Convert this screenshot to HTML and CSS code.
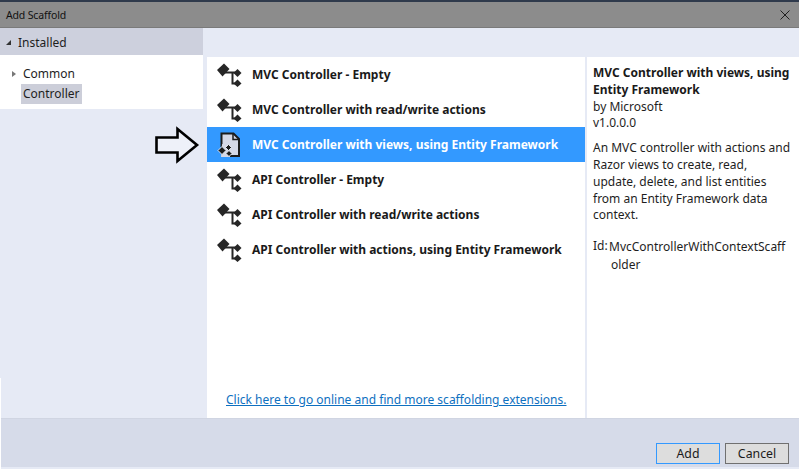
FILE: index.html
```html
<!DOCTYPE html>
<html lang="en">
<head>
<meta charset="utf-8">
<title>Add Scaffold</title>
<link rel="stylesheet" href="styles.css">
</head>
<body>
<div class="dialog">
  <header class="titlebar">
    <span class="title">Add Scaffold</span>
    <svg class="close" width="10" height="10" viewBox="0 0 10 10"><path d="M.5.5l9 9M9.5.5l-9 9" stroke="#1e1e1e" stroke-width="1" fill="none"/></svg>
  </header>
  <div class="body">
    <aside class="side">
      <div class="installed"><span class="tri-open"></span>Installed</div>
      <div class="tree">
        <div class="node"><span class="tri-closed"></span><span class="label">Common</span></div>
        <div class="node"><span class="label selected">Controller</span></div>
      </div>
    </aside>
    <main class="center">
      <div class="list">
        <div class="item"><svg class="ico" width="26" height="25" viewBox="0 0 26 25"><use href="#ctrl"/></svg><span>MVC Controller - Empty</span></div>
        <div class="item"><svg class="ico" width="26" height="25" viewBox="0 0 26 25"><use href="#ctrl"/></svg><span>MVC Controller with read/write actions</span></div>
        <div class="item active">
          <svg class="ico" width="26" height="25" viewBox="0 0 26 25">
            <path d="M4.500 15V1.500h12l5.500 5.500v17H10" fill="#d5d8e6" stroke="#1c1c1c" stroke-width="2"/>
            <path d="M16 2v5.500h5.500" fill="none" stroke="#1c1c1c" stroke-width="1.500"/>
            <path d="M5 12l8 2v11H4z" fill="#d5d8e6"/>
            <path d="M1 18.500l4-4 4 4-4 4zM9 21.500l3-3 3 3-3 3zM8.500 15.500l3-3 3 3-3 3z" fill="#1c1c1c" stroke="#eef0f8" stroke-width=".9"/>
          </svg>
          <span>MVC Controller with views, using Entity Framework</span>
        </div>
        <div class="item"><svg class="ico" width="26" height="25" viewBox="0 0 26 25"><use href="#ctrl"/></svg><span>API Controller - Empty</span></div>
        <div class="item"><svg class="ico" width="26" height="25" viewBox="0 0 26 25"><use href="#ctrl"/></svg><span>API Controller with read/write actions</span></div>
        <div class="item"><svg class="ico" width="26" height="25" viewBox="0 0 26 25"><use href="#ctrl"/></svg><span>API Controller with actions, using Entity Framework</span></div>
      </div>
      <a class="online" href="#">Click here to go online and find more scaffolding extensions.</a>
    </main>
    <section class="details">
      <h2 class="d-title">MVC Controller with views, using Entity Framework</h2>
      <div class="d-meta">by Microsoft</div>
      <div class="d-meta">v1.0.0.0</div>
      <p class="d-desc">An MVC controller with actions and Razor views to create, read, update, delete, and list entities from an Entity Framework data context.</p>
      <div class="d-id"><span class="d-id-key">Id:</span><span class="d-id-val">MvcControllerWithContextScaff<br>older</span></div>
    </section>
  </div>
  <footer class="footer">
    <button class="btn primary">Add</button>
    <button class="btn">Cancel</button>
  </footer>
</div>
<div class="edge"></div>
<svg class="arrow" width="46" height="38" viewBox="0 0 46 38"><path d="M2.500 11.500h21v-8.500l19.500 16-19.500 16v-8.500h-21z" fill="#eef1f9" stroke="#000" stroke-width="2.600"/></svg>
<svg width="0" height="0" class="defs"><defs>
  <g id="ctrl">
    <path d="M8 10.500h12M15.500 10.500v11h4.500" fill="none" stroke="#262626" stroke-width="2"/>
    <path d="M0 8l7-6.500 5.500 5.500-7 7.500z" fill="#262626"/>
    <path d="M20.500 7l4 4-4 4-4-4zM20.500 17.500l4 4-4 3.500-4-3.500z" fill="#262626"/>
  </g>
</defs></svg>
</body>
</html>
```
FILE: styles.css
```css
* { box-sizing: border-box; }
html, body { margin: 0; padding: 0; width: 799px; height: 469px; overflow: hidden; background: #e6eaf5; }
body { font-family: "Noto Sans", "Open Sans", sans-serif; color: #1e1e1e; position: relative; }
.dialog { display: flex; flex-direction: column; height: 467px; }
.titlebar { height: 28px; border-top: 2px solid #2f3a4c; background: #8c8c8c; display: flex; align-items: center; justify-content: space-between; padding: 0 9px 0 6px; border-bottom: 1px solid #7a7a7a; }
.title { font-size: 10.500px; letter-spacing: -.15px; color: #111; }
.body { flex: 1; display: grid; grid-template-columns: 207px 380px 212px; min-height: 0; }
.side { display: flex; flex-direction: column; padding-right: 4px; }
.installed { height: 27px; background: #cdd0dd; font-size: 12px; display: flex; align-items: center; padding: 1px 0 0 6px; gap: 7px; }
.tri-open { width: 0; height: 0; border-left: 5px solid transparent; border-bottom: 5px solid #333; }
.tree { background: #fff; height: 54px; padding: 9px 0 0 12px; font-size: 12px; }
.node { height: 20px; display: flex; align-items: center; }
.tri-closed { width: 0; height: 0; border-left: 4px solid #777; border-top: 3.500px solid transparent; border-bottom: 3.500px solid transparent; margin-right: 5px; }
.label { line-height: 20px; padding: 0 2px; }
.node:last-child .label { margin-left: 9px; }
.selected { background: #ccced9; }
.center { margin-top: 29px; margin-right: 2px; background: #fff; display: flex; flex-direction: column; justify-content: space-between; }
.list { display: flex; flex-direction: column; }
.item { height: 35px; display: flex; align-items: center; padding-left: 10px; gap: 9px; font-size: 12px; font-weight: 700; color: #1a1a1a; }
.item.active { background: #3399ff; color: #fff; }
.ico { flex: none; }
.online { margin: 0 0 10px 19px; font-size: 12px; color: #0e70c0; }
.details { margin-top: 29px; background: #fff; padding: 8px 6px 0 6px; font-size: 12px; line-height: 16.800px; }
.d-title { margin: 0; font-size: 12px; line-height: 16.800px; font-weight: 700; color: #1a1a1a; }
.d-desc { margin: 8px 0 0; }
.d-id { margin-top: 14px; display: flex; }
.d-id-key { width: 18px; flex: none; }
.d-id-val { text-indent: -2px; white-space: nowrap; line-height: 18px; }
.footer { height: 49px; flex: none; background: #d6dbe9; border-top: 1px solid #d0d5e2; display: flex; justify-content: flex-end; align-items: flex-end; gap: 5px; padding: 0 10px 3px 0; }
.btn { width: 64px; height: 21px; padding: 0; background: #dddddd; border: 1px solid #707070; font: 12.300px "Noto Sans", sans-serif; color: #1a1a1a; }
.btn.primary { border-color: #3399ff; }
.arrow { position: absolute; left: 154px; top: 126px; }
.defs { position: absolute; }
.edge { position: absolute; left: 0; top: 378px; bottom: 0; width: 1px; background: #fff; }
```
